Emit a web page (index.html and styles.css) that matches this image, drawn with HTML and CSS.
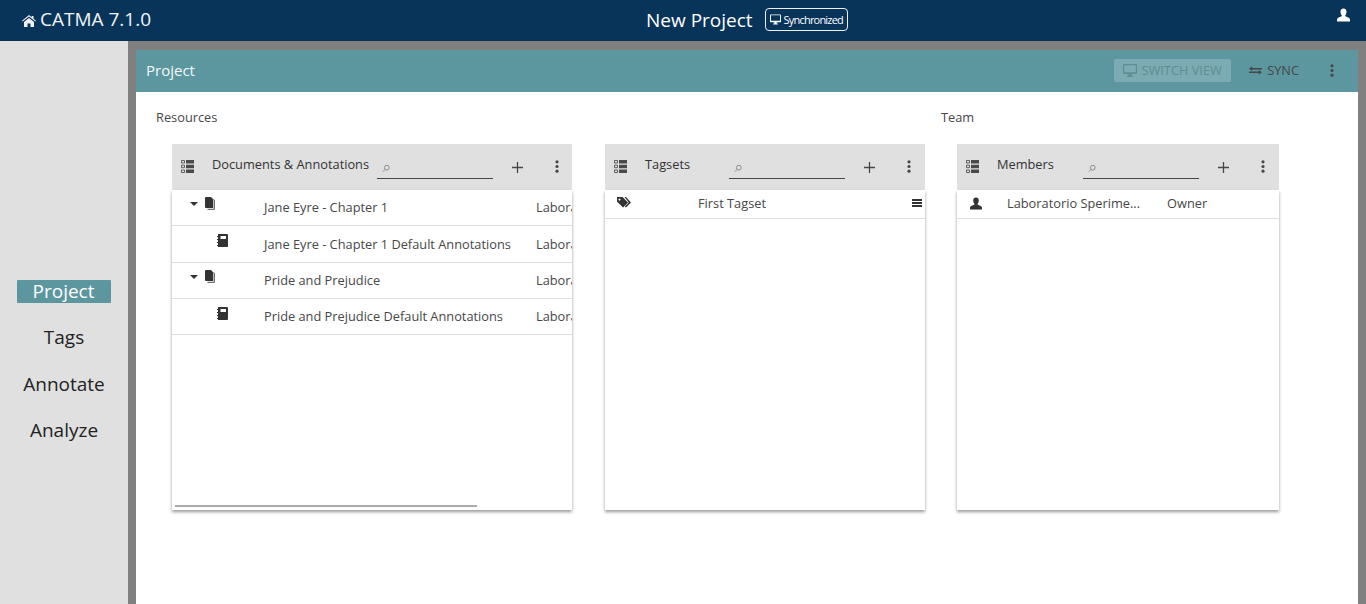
FILE: index.html
```html
<!DOCTYPE html>
<html lang="en">

<head>
    <meta charset="UTF-8" />
    <title>CATMA 7.1.0</title>
    <link rel="stylesheet" href="styles.css">
</head>

<body>
    <svg class="sprites" width="0" height="0">
        <symbol id="i-list" viewBox="0 0 13 13">
            <path d="M.5.500h3v2.500h-3zM.5 5.200h3v2.500h-3zM.5 10h3v2.500h-3z" fill="none" stroke="currentColor" stroke-width="1" opacity=".85" />
            <path d="M5 0h8v3.400H5zM5 4.800h8v3.400H5zM5 9.600h8V13H5z" />
        </symbol>
        <symbol id="i-more" viewBox="0 0 4 14">
            <circle cx="2" cy="2" r="1.7" />
            <circle cx="2" cy="7" r="1.7" />
            <circle cx="2" cy="12" r="1.7" />
        </symbol>
        <symbol id="i-plus" viewBox="0 0 12 12">
            <path d="M5.300 0h1.400v5.300H12v1.400H6.700V12H5.300V6.700H0V5.300h5.300z" />
        </symbol>
        <symbol id="i-search" viewBox="0 0 10 10">
            <circle cx="6" cy="4" r="3" fill="none" stroke="currentColor" />
            <path d="M3.800 6.200L1 9" fill="none" stroke="currentColor" />
        </symbol>
        <symbol id="i-doc" viewBox="0 0 10 13">
            <path d="M1 0h5l2.200 2.200V11H1q-1 0-1-1V1q0-1 1-1z" />
            <path d="M8.800 2.800H10V12q0 1-1 1H2.500v-1.200h6.300z" opacity=".7" />
        </symbol>
        <symbol id="i-book" viewBox="0 0 11 13">
            <path d="M1 0h9q1 0 1 1v11q0 1-1 1H1zM3.500 2v3h5.500V2z" fill-rule="evenodd" />
            <path d="M0 2h1v1H0zM0 5h1v1H0zM0 8h1v1H0zM0 11h1v1H0z" />
        </symbol>
        <symbol id="i-user" viewBox="0 0 12 12">
            <path d="M6 0c1.800 0 2.800 1.200 2.800 3S7.900 6 7.400 6.800c0 .8 4.600 1.500 4.600 3.500V12H0v-1.700c0-2 4.600-2.700 4.600-3.500C4.100 6 3.200 4.800 3.200 3S4.200 0 6 0z" />
        </symbol>
        <symbol id="i-screen" viewBox="0 0 14 13">
            <path d="M1 0h12q1 0 1 1v8q0 1-1 1H8.500v1.500H10V13H4v-1.500h1.500V10H1q-1 0-1-1V1q0-1 1-1zM1.200 1.200v7h11.600v-7z" fill-rule="evenodd" />
        </symbol>
    </svg>

    <header class="topbar">
        <div class="brand">
            <svg class="home-icon" viewBox="0 0 14 12">
                <path d="M7 0l2.700 2.200V1h1.800v2.700L14 5.800l-.6.800L7 1.500.6 6.600 0 5.800zM2 7l5-4 5 4v5H8.500V8.500h-3V12H2z" />
            </svg>
            CATMA 7.1.0
        </div>
        <div class="project-title">
            <span>New Project</span>
            <span class="sync-badge"><svg class="badge-icon"><use href="#i-screen" /></svg>Synchronized</span>
        </div>
        <svg class="account-icon"><use href="#i-user" /></svg>
    </header>

    <div class="shell">
        <nav class="sidenav">
            <a class="nav-item active">Project</a>
            <a class="nav-item">Tags</a>
            <a class="nav-item">Annotate</a>
            <a class="nav-item">Analyze</a>
        </nav>

        <main class="panel">
            <div class="panel-head">
                <span class="panel-title">Project</span>
                <div class="panel-actions">
                    <button class="btn-switch"><svg class="btn-icon"><use href="#i-screen" /></svg>SWITCH VIEW</button>
                    <button class="btn-sync">
                        <svg class="sync-icon" viewBox="0 0 14 9">
                            <path d="M3.500 0v1.700H14v1.600H3.500V5L0 2.500zM10.500 4v1.700H0v1.600h10.500V9L14 6.500z" />
                        </svg>SYNC
                    </button>
                    <svg class="panel-more"><use href="#i-more" /></svg>
                </div>
            </div>

            <div class="sections">
                <section class="resources">
                    <h2>Resources</h2>
                    <div class="cards">
                        <div class="card card-docs">
                            <div class="card-head">
                                <svg class="list-icon"><use href="#i-list" /></svg>
                                <span class="card-title title-docs">Documents &amp; Annotations</span>
                                <div class="search"><svg class="search-icon"><use href="#i-search" /></svg></div>
                                <svg class="plus-icon"><use href="#i-plus" /></svg>
                                <svg class="more-icon"><use href="#i-more" /></svg>
                            </div>
                            <div class="card-body">
                                <div class="doc-row">
                                    <div class="tree-cell">
                                        <span class="caret"></span>
                                        <svg class="doc-icon"><use href="#i-doc" /></svg>
                                    </div>
                                    <span class="doc-name">Jane Eyre - Chapter 1</span>
                                    <span class="doc-owner">Laboratorio</span>
                                </div>
                                <div class="doc-row">
                                    <div class="tree-cell">
                                        <svg class="book-icon"><use href="#i-book" /></svg>
                                    </div>
                                    <span class="doc-name">Jane Eyre - Chapter 1 Default Annotations</span>
                                    <span class="doc-owner">Laboratorio</span>
                                </div>
                                <div class="doc-row">
                                    <div class="tree-cell">
                                        <span class="caret"></span>
                                        <svg class="doc-icon"><use href="#i-doc" /></svg>
                                    </div>
                                    <span class="doc-name">Pride and Prejudice</span>
                                    <span class="doc-owner">Laboratorio</span>
                                </div>
                                <div class="doc-row">
                                    <div class="tree-cell">
                                        <svg class="book-icon"><use href="#i-book" /></svg>
                                    </div>
                                    <span class="doc-name">Pride and Prejudice Default Annotations</span>
                                    <span class="doc-owner">Laboratorio</span>
                                </div>
                                <div class="scrollbar"></div>
                            </div>
                        </div>

                        <div class="card card-tagsets">
                            <div class="card-head">
                                <svg class="list-icon"><use href="#i-list" /></svg>
                                <span class="card-title title-tagsets">Tagsets</span>
                                <div class="search"><svg class="search-icon"><use href="#i-search" /></svg></div>
                                <svg class="plus-icon"><use href="#i-plus" /></svg>
                                <svg class="more-icon"><use href="#i-more" /></svg>
                            </div>
                            <div class="card-body">
                                <div class="simple-row tagset-row">
                                    <svg class="tag-icon" viewBox="0 0 14 11">
                                        <path d="M0 0h5.500L11 5.500 6 10.500 0 4.500zM2.500 1.500a1 1 0 1 0 .01 0zM7.500 0H9l5 5.500-5 5-1.200-1 4-4z" fill-rule="evenodd" />
                                    </svg>
                                    <span>First Tagset</span>
                                    <span class="burger"></span>
                                </div>
                            </div>
                        </div>
                    </div>
                </section>

                <section class="team">
                    <h2>Team</h2>
                    <div class="cards">
                        <div class="card card-members">
                            <div class="card-head">
                                <svg class="list-icon"><use href="#i-list" /></svg>
                                <span class="card-title title-members">Members</span>
                                <div class="search"><svg class="search-icon"><use href="#i-search" /></svg></div>
                                <svg class="plus-icon"><use href="#i-plus" /></svg>
                                <svg class="more-icon"><use href="#i-more" /></svg>
                            </div>
                            <div class="card-body">
                                <div class="simple-row member-row">
                                    <svg class="member-icon"><use href="#i-user" /></svg>
                                    <span>Laboratorio Sperime...</span>
                                    <span>Owner</span>
                                </div>
                            </div>
                        </div>
                    </div>
                </section>
            </div>
        </main>
    </div>
</body>

</html>
```

FILE: styles.css
```css
* {
    box-sizing: border-box;
}

html,
body {
    height: 100%;
}

body {
    margin: 0;
    overflow: hidden;
    font-family: "Open Sans", sans-serif;
    font-size: 12.8px;
    color: #474747;
    background-color: #808080;
    display: flex;
    flex-direction: column;
}

svg {
    display: block;
    fill: currentColor;
    flex: none;
}

.sprites {
    position: absolute;
}

/* top bar */
.topbar {
    height: 41px;
    flex: none;
    background-color: #08345a;
    color: #fff;
    display: flex;
    align-items: center;
    padding: 0 16px 2px 22px;
}

.brand {
    width: 624px;
    flex: none;
    display: flex;
    align-items: center;
    gap: 4px;
    font-size: 19px;
    line-height: 25px;
    color: #f1f4f6;
}

.home-icon {
    width: 14px;
    height: 12px;
    margin-top: 2px;
}

.project-title {
    display: flex;
    align-items: center;
    gap: 12px;
    font-size: 19px;
}

.sync-badge {
    display: flex;
    align-items: center;
    gap: 3px;
    height: 23px;
    padding: 0 4px;
    border: 1px solid #eef;
    border-radius: 4px;
    font-size: 11px;
    letter-spacing: -0.8px;
}

.badge-icon {
    width: 11px;
    height: 11px;
}

.account-icon {
    margin-left: auto;
    margin-bottom: 9px;
    width: 13px;
    height: 14px;
}

/* main layout */
.shell {
    flex: 1;
    display: flex;
    min-height: 0;
}

.sidenav {
    width: 128px;
    flex: none;
    background-color: #e0e0e0;
    display: flex;
    flex-direction: column;
    align-items: center;
    justify-content: center;
    padding-top: 78px;
    gap: 21.400px;
}

.nav-item {
    font-size: 19px;
    line-height: 25px;
    color: #222;
}

.nav-item.active {
    width: 94px;
    height: 23px;
    line-height: 23px;
    margin-left: -1px;
    margin-bottom: 1px;
    text-align: center;
    background-color: #5c97a0;
    color: #fff;
    border-radius: 1px;
}

.panel {
    flex: 1;
    margin: 9px 8px 0;
    background-color: #fff;
}

.panel-head {
    height: 42px;
    background-color: #5c97a0;
    display: flex;
    align-items: center;
    justify-content: space-between;
    padding: 0 24px 2px 10px;
}

.panel-title {
    font-size: 15px;
    color: #f4f8f8;
}

.panel-actions {
    display: flex;
    align-items: center;
}

.panel-actions button {
    font-family: inherit;
    font-size: 12.8px;
    border: none;
    display: flex;
    align-items: center;
    padding: 0;
}

.btn-switch {
    width: 117px;
    height: 23px;
    justify-content: center;
    gap: 4px;
    background-color: #7cabb3;
    color: #5f8d94;
    border-radius: 2px;
}

.btn-icon {
    width: 14px;
    height: 13px;
}

.btn-sync {
    margin-left: 18px;
    background: none;
    color: #474747;
    gap: 5px;
}

.sync-icon {
    width: 13px;
    height: 9px;
}

.panel-more {
    width: 4px;
    height: 13px;
    margin-left: 31px;
    color: #474747;
}

.sections {
    display: flex;
    padding: 17px 0 0 20px;
}

.sections h2 {
    margin: 0 0 18px;
    font-size: 12.8px;
    font-weight: 400;
    line-height: 17px;
    color: #474747;
}

.resources {
    width: 785px;
    flex: none;
}

.cards {
    display: flex;
    gap: 33px;
    padding-left: 16px;
}

/* cards */
.card {
    height: 366px;
    display: flex;
    flex-direction: column;
}

.card-docs {
    width: 400px;
}

.card-tagsets {
    width: 320px;
}

.card-members {
    width: 322px;
}

.card-head {
    height: 46px;
    flex: none;
    background-color: #e0e0e0;
    display: flex;
    align-items: center;
    padding-left: 9px;
}

.list-icon {
    width: 13px;
    height: 13px;
    margin: -2px 18px 0 0;
    color: #4a4a4a;
}

.card-title {
    color: #333;
    margin-top: -7px;
    white-space: nowrap;
}

.title-docs {
    width: 165px;
}

.title-tagsets {
    width: 84px;
}

.title-members {
    width: 86px;
}

.search {
    width: 116px;
    height: 24px;
    border-bottom: 1px solid #474747;
    padding: 9px 0 0 5px;
    color: #777;
}

.search-icon {
    width: 8px;
    height: 9px;
}

.plus-icon {
    width: 11px;
    height: 11px;
    margin-left: 19px;
    color: #474747;
}

.more-icon {
    width: 4px;
    height: 13px;
    margin-left: 32px;
    margin-top: -1px;
    color: #474747;
}

.card-body {
    flex: 1;
    position: relative;
    overflow: hidden;
    background-color: #fff;
    box-shadow: 0 2px 3px rgba(0, 0, 0, 0.4);
}

.doc-row {
    height: 36.300px;
    border-bottom: 1px solid #dfdfdf;
    display: grid;
    grid-template-columns: 92px 272px 1fr;
    padding-top: 8.400px;
    white-space: nowrap;
}

.tree-cell {
    display: flex;
    align-items: flex-start;
    margin-top: -1.400px;
    padding-left: 18px;
}

.caret {
    margin: 5px 7px 0 0;
    border: 4px solid transparent;
    border-top: 4px solid #333;
    border-bottom: none;
}

.doc-icon {
    width: 10px;
    height: 13px;
    color: #333;
}

.book-icon {
    width: 11px;
    height: 13px;
    margin: 1px 0 0 27px;
    color: #333;
}

.scrollbar {
    position: absolute;
    left: 3px;
    bottom: 3px;
    width: 302px;
    height: 2px;
    background-color: #aaa;
}

.simple-row {
    height: 29px;
    border-bottom: 1px solid #dfdfdf;
    display: flex;
    align-items: flex-start;
    padding-top: 4px;
    white-space: nowrap;
}

.tagset-row {
    padding-left: 12px;
}

.tag-icon {
    width: 14px;
    height: 11px;
    margin: 3px 67px 0 0;
    color: #333;
}

.burger {
    width: 10px;
    height: 8px;
    margin: 5px 3px 0 auto;
    border-top: 2px solid #333;
    border-bottom: 2px solid #333;
}

.burger::after {
    content: "";
    display: block;
    height: 2px;
    margin-top: 1px;
    background-color: #333;
}

.member-row {
    padding-left: 13px;
}

.member-icon {
    width: 12px;
    height: 13px;
    margin: 3px 25px 0 0;
    color: #333;
}

.member-row span:last-child {
    margin-left: 27px;
}
```
